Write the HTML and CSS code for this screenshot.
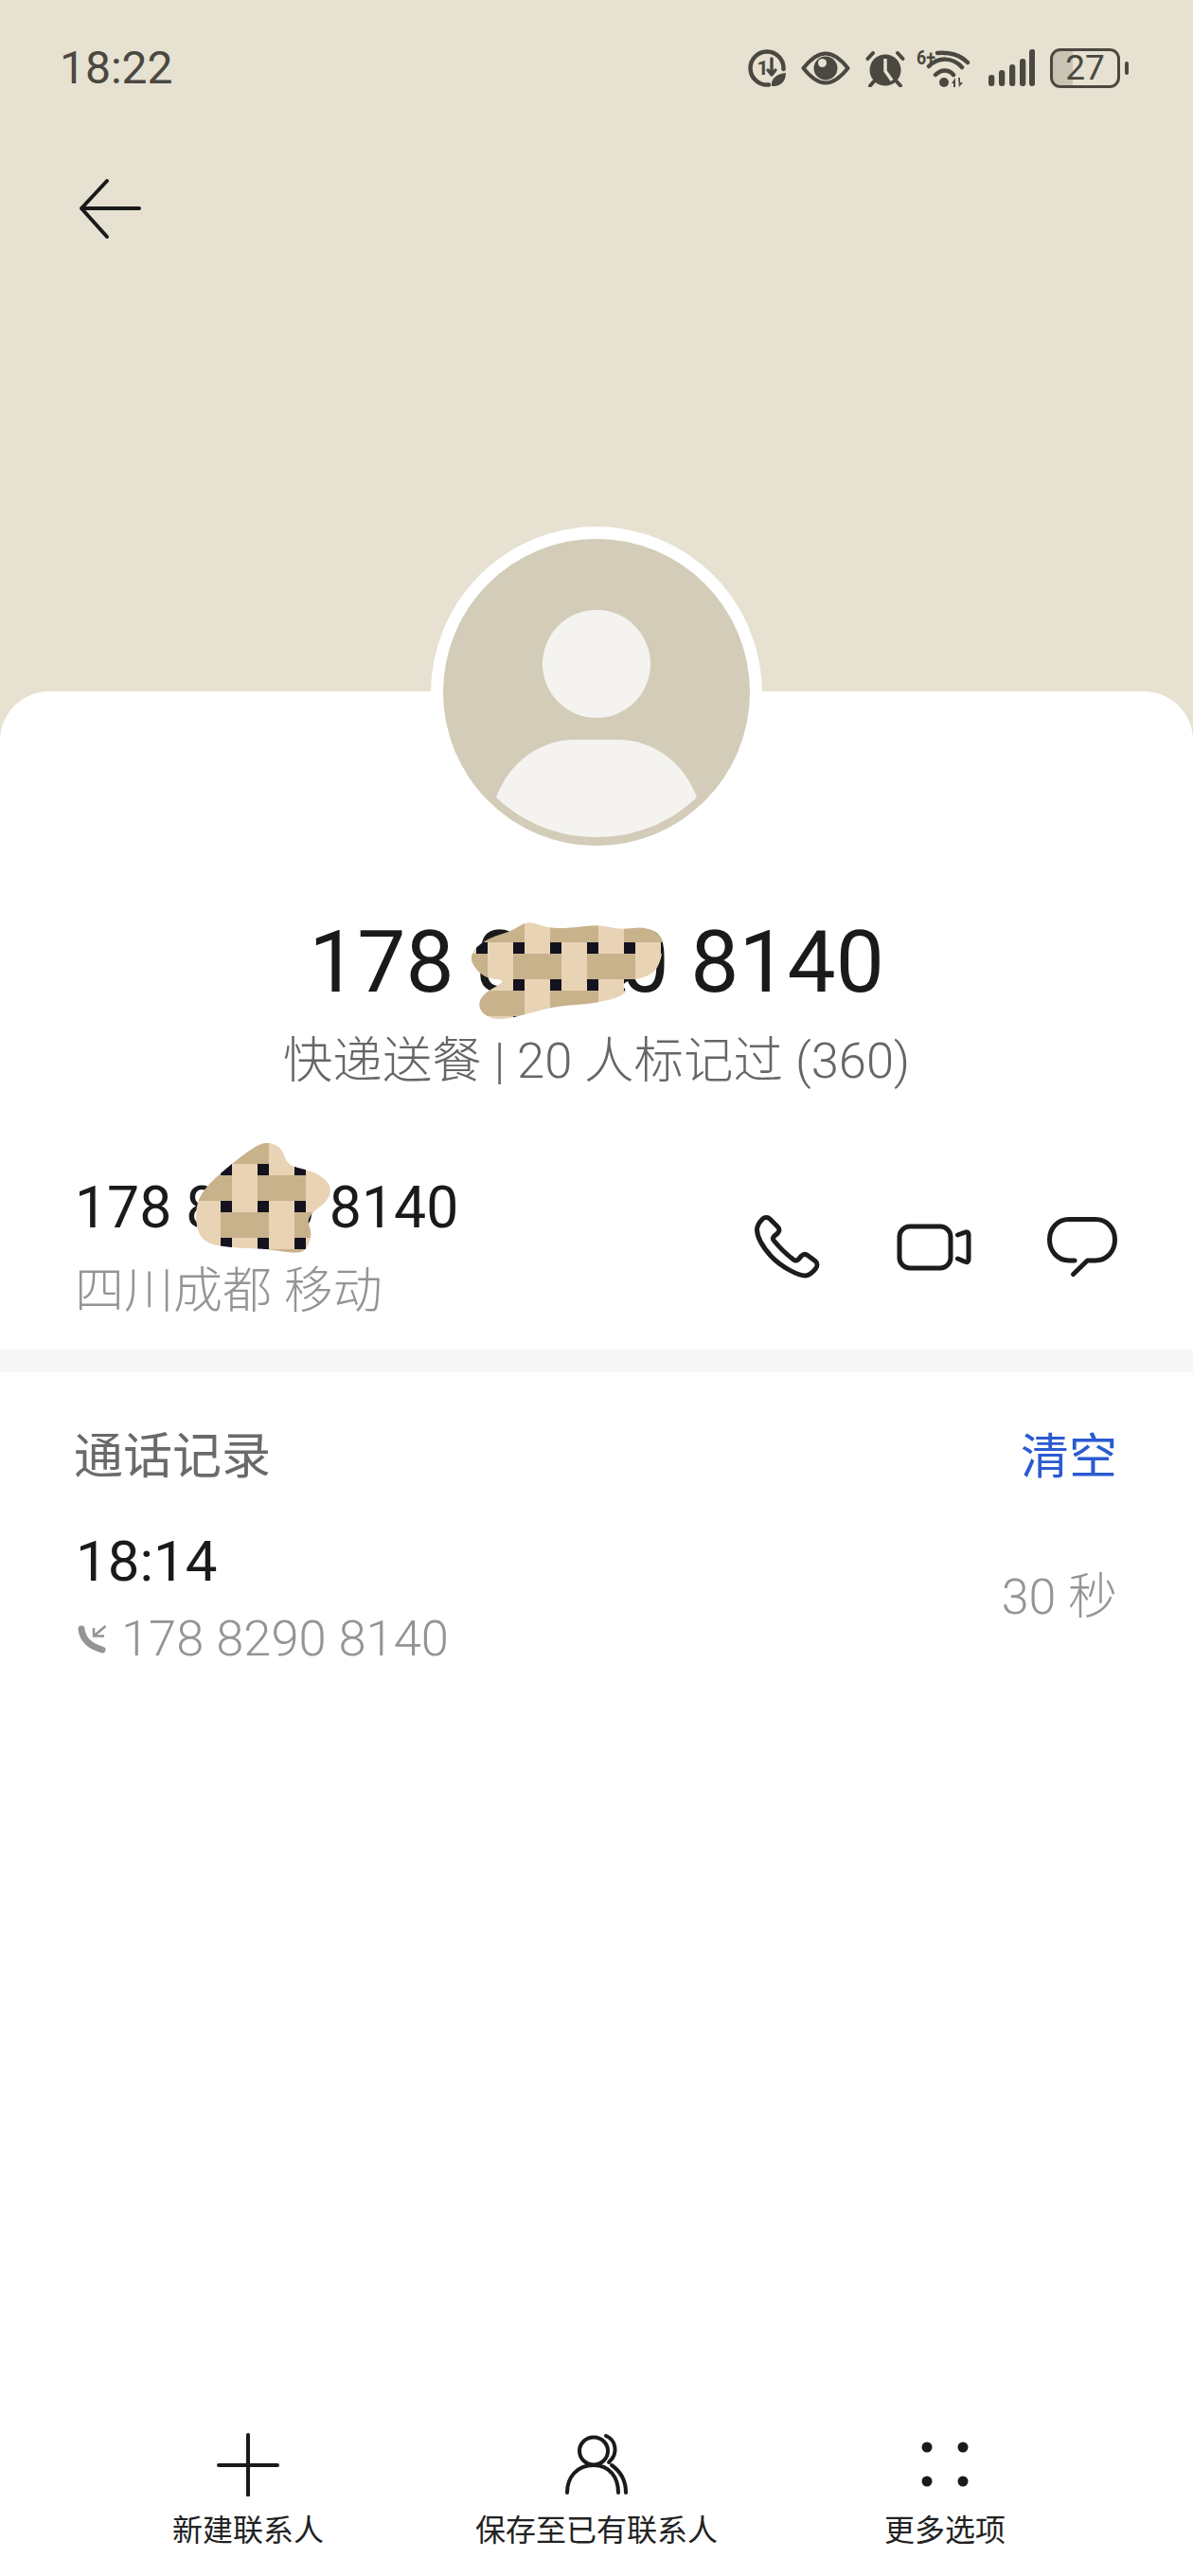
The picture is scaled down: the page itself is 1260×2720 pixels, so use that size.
FILE: index.html
```html
<!DOCTYPE html>
<html lang="zh-CN">
<head>
  <meta charset="UTF-8" />
  <meta name="viewport" content="width=device-width, initial-scale=1.0" />
  <title>号码详情</title>
  <link rel="stylesheet" href="styles.css">
</head>
<body>
  <div class="page">
    <div class="hero">
      <div class="status-bar">
        <span class="clock">18:22</span>
        <div class="status-icons">
          <svg class="st-icon" width="40" height="40" viewBox="0 0 40 40">
            <path class="st-line" d="M37.5 21A17.5 17.5 0 1 0 22 37.4" stroke-width="4.5" />
            <text class="st-one" x="9.5" y="27">1</text>
            <path class="st-line" d="M25 10V27M21 22L25 27L29 22" stroke-width="3.4" />
            <path class="st-fill" d="M25 39C24 31 30 26 40 25C40 34 34 40 25 39Z" />
          </svg>
          <svg class="st-icon" width="52" height="36" viewBox="0 0 52 36">
            <path class="st-line" d="M2.5 18C12 6 20 2.5 26 2.5C32 2.5 40 6 49.5 18C40 30 32 33.5 26 33.5C20 33.5 12 30 2.5 18Z" stroke-width="4" />
            <circle class="st-fill" cx="26" cy="18" r="12.5" />
            <circle class="st-cut" cx="22.5" cy="12.5" r="4.5" />
          </svg>
          <svg class="st-icon st-alarm" width="42" height="40" viewBox="0 0 42 40">
            <circle class="st-fill" cx="21" cy="22" r="16.5" />
            <path class="st-knock" d="M21 10V23L28 33" />
            <path class="st-line" d="M2.5 10L8 4M39.5 10L34 4M9 34L5 38.5M33 34L37 38.5" stroke-width="4" />
          </svg>
          <svg class="st-icon st-wifi" width="59" height="48" viewBox="0 -4 59 48">
            <text class="st-six" x="0" y="16" textLength="20" lengthAdjust="spacingAndGlyphs">6+</text>
            <path class="st-line" d="M22 4C34 3 46 6 54 14M13 18C23 8 38 8 48 19M20 27C26 21 34 21 39 27" stroke-width="4.5" />
            <circle class="st-fill" cx="29" cy="35" r="5" />
            <path class="st-fill" d="M37 36L41 30V40H39V36ZM44 30H46V35H49L45 40Z" />
          </svg>
          <svg class="st-icon" width="50" height="40" viewBox="0 0 50 40">
            <rect class="st-fill" x="1" y="27" width="6.3" height="12" rx="3" />
            <rect class="st-fill" x="12" y="22" width="6.3" height="17" rx="3" />
            <rect class="st-fill" x="23" y="16" width="6.3" height="23" rx="3" />
            <rect class="st-fill" x="34" y="10" width="6.3" height="29" rx="3" />
            <rect class="st-fill" x="44" y="0" width="6.3" height="39" rx="3" />
          </svg>
          <div class="battery"><span class="battery-level">27</span></div>
        </div>
      </div>
      <svg class="back" width="70" height="66" viewBox="0 0 70 66">
        <path d="M65 33H4M31 4L4 33L31 63" />
      </svg>
    </div>

    <div class="card">
      <div class="avatar">
        <svg width="324" height="324" viewBox="0 0 324 324">
          <circle cx="162" cy="162" r="162" fill="#d2ccb8" />
          <circle cx="162" cy="132" r="57" fill="#f4f3ef" />
          <path d="M56 273C70 235 103 212 140 212H184C221 212 254 235 268 273C238 301 201 315 162 315C123 315 86 301 56 273Z" fill="#f4f3ef" />
        </svg>
      </div>

      <h1 class="number-title">178 8290 8140</h1>
      <p class="number-tag">快递送餐 | 20 人标记过 (360)</p>

      <div class="contact-row">
        <div class="contact-text">
          <div class="contact-number">178 8290 8140</div>
          <div class="contact-place">四川成都 移动</div>
        </div>
        <div class="contact-actions">
          <svg class="action" width="72" height="72" viewBox="0 0 72 72">
            <path d="M9 6.5C11 4 15 4 17 6L25.5 14.5C27.5 16.5 27.5 19 25.5 21L21.5 24.5C20 26 20 27 21 28.5C27 36 34 43 42 49C44 50.5 45 50.5 47 49L50.5 45C52.5 43 55 43 57 44.5L65 50.5C67.5 52.5 67.5 56 65.5 58.5C62.5 62.5 59 65.5 54.5 66C48 66 30 58 18 45C10 36 4 27 3.5 18C3.5 13 6 9.5 9 6.5Z" />
          </svg>
          <svg class="action" width="85" height="60" viewBox="0 0 85 60">
            <rect x="6" y="8" width="54" height="44" rx="11" />
            <path d="M67.5 17L76 14C78 13.5 79 15 79 16.5V43C79 45 77.5 46 76 45.5L67.5 42" />
          </svg>
          <svg class="action" width="76" height="68" viewBox="0 0 76 68">
            <path d="M30 48H24C12 48 3.5 38 3.5 26C3.5 14 12 4.5 24 4.5H52C64 4.5 72.5 14 72.5 26C72.5 38 64 48 52 48H43.5L28.5 62.5" />
          </svg>
        </div>
      </div>

      <div class="divider"></div>

      <div class="log-section">
        <div class="log-head">
          <span class="log-title">通话记录</span>
          <span class="log-clear">清空</span>
        </div>
        <div class="log-row">
          <div>
            <div class="log-time">18:14</div>
            <div class="log-number">
              <svg class="log-icon" width="34" height="36" viewBox="0 0 34 36">
                <path class="log-phone" d="M6 8C7 18 14 26 28 30" />
                <path class="log-arrow" d="M31.5 5L19 15.5M19 7V15.5H30" />
              </svg>
              178 8290 8140
            </div>
          </div>
          <span class="log-length">30 秒</span>
        </div>
      </div>

      <nav class="bottom-nav">
        <div class="nav-item">
          <svg width="70" height="68" viewBox="0 0 70 68">
            <path d="M4 35H66M35 3V67" />
          </svg>
          <span>新建联系人</span>
        </div>
        <div class="nav-item">
          <svg width="70" height="68" viewBox="0 0 70 68">
            <ellipse cx="32" cy="20" rx="15" ry="14.5" />
            <path d="M4 64C4 48 14 35 32 35C49 35 58 48 58 64M45 4C55 8 59 22 48 32M51 35C61 42 66 52 66 64" />
          </svg>
          <span>保存至已有联系人</span>
        </div>
        <div class="nav-item">
          <svg class="nav-dots" width="70" height="68" viewBox="0 0 70 68">
            <circle cx="16" cy="16" r="5.5" />
            <circle cx="54" cy="16" r="5.5" />
            <circle cx="16" cy="52" r="5.5" />
            <circle cx="54" cy="52" r="5.5" />
          </svg>
          <span>更多选项</span>
        </div>
      </nav>
    </div>

    <!-- hand drawn censor marks over the numbers -->
    <svg class="scrawls" width="1260" height="2720" viewBox="0 0 1260 2720">
      <defs>
        <pattern id="weave-a" width="78" height="78" patternUnits="userSpaceOnUse" x="503" y="995">
          <rect width="78" height="78" fill="#e8d3b5" />
          <rect y="12" width="12" height="27" fill="#c8b28c" />
          <rect x="39" y="12" width="39" height="27" fill="#c8b28c" />
          <rect y="51" width="51" height="27" fill="#c8b28c" />
          <rect width="12" height="12" fill="#14121f" />
          <rect x="39" width="12" height="12" fill="#14121f" />
          <rect y="39" width="12" height="12" fill="#14121f" />
          <rect x="39" y="39" width="12" height="12" fill="#14121f" />
        </pattern>
        <pattern id="weave-b" width="78" height="78" patternUnits="userSpaceOnUse" x="233" y="1229">
          <rect width="78" height="78" fill="#e8d3b5" />
          <rect y="12" width="12" height="27" fill="#c8b28c" />
          <rect x="39" y="12" width="39" height="27" fill="#c8b28c" />
          <rect y="51" width="51" height="27" fill="#c8b28c" />
          <rect width="12" height="12" fill="#14121f" />
          <rect x="39" width="12" height="12" fill="#14121f" />
          <rect y="39" width="12" height="12" fill="#14121f" />
          <rect x="39" y="39" width="12" height="12" fill="#14121f" />
        </pattern>
      </defs>
      <path fill="url(#weave-a)" d="M549 977.5Q557 972 568 976Q579 980 590 980Q601 980 617 978Q633 976 644 979Q655 982 668.5 980Q682 978 692 984Q702 990 699.5 1005Q697 1020 690.5 1026Q684 1032 669.5 1034.5Q655 1037 659.5 1043.5Q664 1050 646 1055Q628 1060 608 1061Q588 1062 570 1067Q552 1072 537.5 1075Q523 1078 514 1072.5Q505 1067 506.5 1058.5Q508 1050 522.5 1042.5Q537 1035 524.5 1034Q512 1033 504.5 1025Q497 1017 498 1010Q499 1003 508 996.5Q517 990 529 986.5Q541 983 549 977.5Z" />
      <path fill="url(#weave-b)" d="M290 1208.5Q298 1212 300.5 1221Q303 1230 313 1232.5Q323 1235 330 1237.5Q337 1240 343.5 1246Q350 1252 348.5 1260Q347 1268 335 1276.5Q323 1285 326.5 1294Q330 1303 326.5 1312.5Q323 1322 315 1322.5Q307 1323 292 1320.5Q277 1318 262 1318Q247 1318 232 1315.5Q217 1313 212 1305Q207 1297 207 1283.5Q207 1270 213.5 1260Q220 1250 233.5 1238.5Q247 1227 257 1219.5Q267 1212 274.5 1208.5Q282 1205 290 1208.5Z" />
    </svg>
  </div>
</body>
</html>
```

FILE: styles.css
```css
* {
  box-sizing: border-box;
}
body {
  margin: 0;
  font-family: "Roboto", "Noto Sans CJK SC", sans-serif;
  color: #1a1a1a;
}
.page {
  position: relative;
  width: 1260px;
  height: 2720px;
  display: flex;
  flex-direction: column;
  background: #e6e1d1;
  overflow: hidden;
}

/* top part */
.hero {
  height: 730px;
  padding: 48px 68px 0 63px;
}
.status-bar {
  display: flex;
  justify-content: space-between;
  align-items: center;
  height: 48px;
  color: #4a4840;
}
.clock {
  font-size: 48px;
  line-height: 48px;
}
.status-icons {
  display: flex;
  align-items: center;
  gap: 16px;
}
.st-icon {
  display: block;
}
.st-wifi {
  margin-left: -4px;
}
.st-line {
  fill: none;
  stroke: #4a4840;
  stroke-linecap: round;
  stroke-linejoin: round;
}
.st-fill {
  fill: #4a4840;
}
.st-cut {
  fill: #e6e1d1;
}
.st-knock {
  fill: none;
  stroke: #e6e1d1;
  stroke-width: 3.5;
}
.st-one {
  fill: #4a4840;
  font-size: 21px;
  font-weight: 700;
}
.st-six {
  fill: #4a4840;
  font-size: 21px;
  font-weight: 700;
}
.battery {
  position: relative;
  width: 74px;
  height: 42px;
  margin-right: 9px;
  border: 3px solid #4a4840;
  border-radius: 11px;
  background: linear-gradient(to right, #c8c3b3 21px, transparent 21px);
  display: flex;
  justify-content: center;
  align-items: center;
}
.battery::after {
  content: "";
  position: absolute;
  right: -12px;
  top: 11px;
  width: 4px;
  height: 14px;
  border-radius: 2px;
  background: #4a4840;
}
.battery-level {
  font-size: 37px;
  line-height: 36px;
}
.back {
  display: block;
  margin: 91px 0 0 19px;
}
.back path {
  fill: none;
  stroke: #1a1a1a;
  stroke-width: 4;
  stroke-linecap: round;
  stroke-linejoin: round;
}

/* white card */
.card {
  flex: 1;
  display: flex;
  flex-direction: column;
  background: #fff;
  border-radius: 52px 52px 0 0;
}
.avatar {
  align-self: center;
  width: 350px;
  height: 352px;
  margin: -174px 1px 0 0;
  padding: 13px 13px 15px;
  border-radius: 50%;
  background: #fff;
}
.avatar svg {
  display: block;
}
.number-title {
  margin: 58px 0 0;
  font-size: 91px;
  line-height: 100px;
  font-weight: 400;
  text-align: center;
}
.number-tag {
  margin: 24px 0 0;
  font-size: 52.5px;
  line-height: 60px;
  font-weight: 300;
  color: #666;
  text-align: center;
}
.contact-row {
  display: flex;
  justify-content: space-between;
  align-items: center;
  margin-top: 91px;
  padding: 0 79px 31px 79px;
}
.contact-number {
  font-size: 60.7px;
  line-height: 70px;
}
.contact-place {
  margin-top: 23px;
  font-size: 52px;
  line-height: 60px;
  font-weight: 300;
  color: #949494;
}
.contact-actions {
  display: flex;
  align-items: center;
  gap: 76px;
  margin-bottom: 2px;
}
.action {
  display: block;
  fill: none;
  stroke: #1c1c1c;
  stroke-width: 5;
  stroke-linecap: round;
  stroke-linejoin: round;
}
.divider {
  height: 24px;
  background: #f7f7f7;
}

/* call log */
.log-section {
  padding: 60px 80px 0;
}
.log-head {
  display: flex;
  justify-content: space-between;
  font-size: 52px;
  line-height: 60px;
}
.log-title {
  margin-left: -2px;
  color: #6a6a6a;
}
.log-clear {
  font-size: 51px;
  color: #2a5bd0;
}
.log-row {
  display: flex;
  justify-content: space-between;
  align-items: center;
  margin-top: 45px;
}
.log-time {
  font-size: 60px;
  line-height: 70px;
}
.log-number {
  display: flex;
  align-items: center;
  gap: 14px;
  margin-top: 16px;
  font-size: 52.5px;
  line-height: 60px;
  font-weight: 300;
  color: #949494;
}
.log-icon {
  display: block;
}
.log-phone {
  fill: none;
  stroke: #949494;
  stroke-width: 7;
  stroke-linecap: round;
}
.log-arrow {
  fill: none;
  stroke: #949494;
  stroke-width: 2.5;
}
.log-length {
  font-size: 52px;
  line-height: 60px;
  font-weight: 300;
  color: #949494;
}

/* bottom actions */
.bottom-nav {
  display: grid;
  grid-template-columns: repeat(3, 368px);
  margin-top: auto;
  padding: 0 78px 28px;
}
.nav-item {
  display: flex;
  flex-direction: column;
  align-items: center;
  gap: 16px;
  font-size: 32px;
  line-height: 40px;
  color: #222;
}
.nav-item svg {
  display: block;
  fill: none;
  stroke: #1a1a1a;
  stroke-width: 4;
  stroke-linecap: round;
}
.nav-item .nav-dots {
  fill: #1a1a1a;
  stroke: none;
}

.scrawls {
  position: absolute;
  left: 0;
  top: 0;
  pointer-events: none;
}
```
